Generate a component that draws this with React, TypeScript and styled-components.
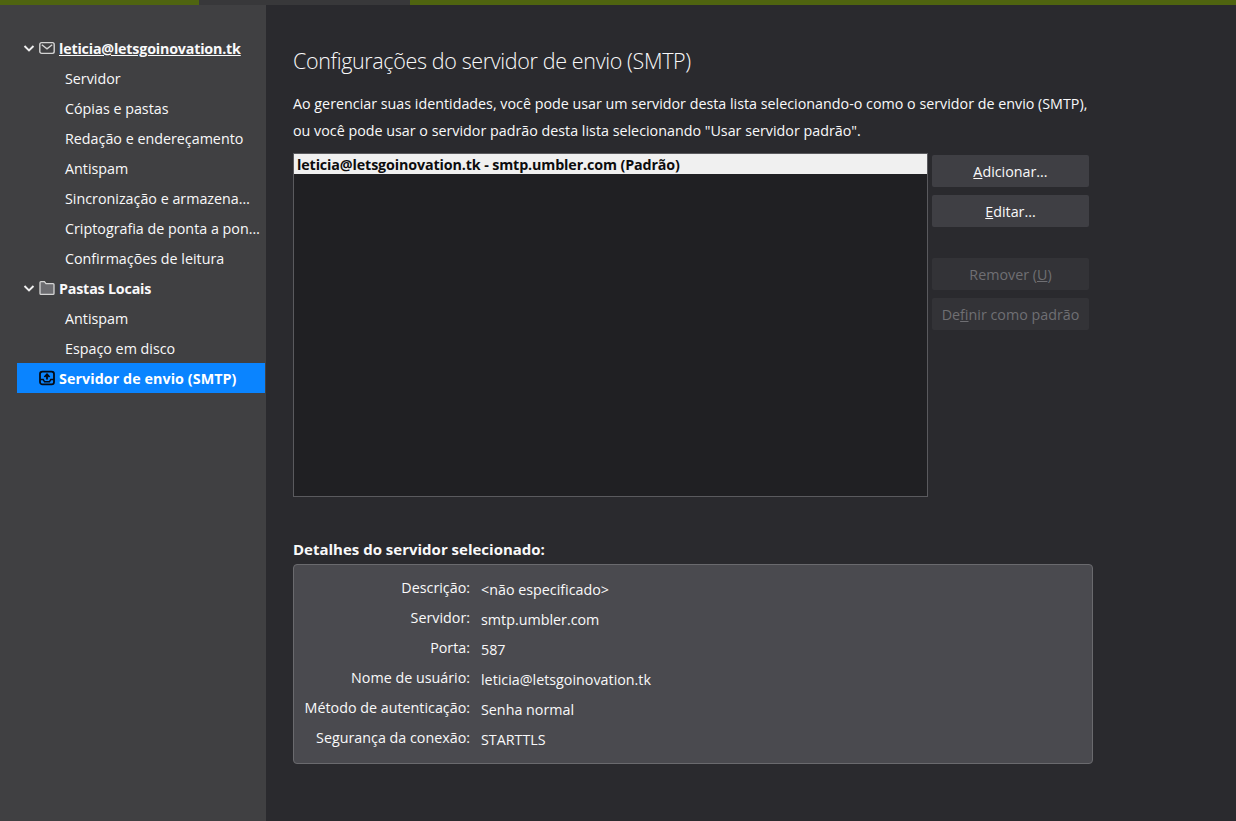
import React from "react";
import styled, { createGlobalStyle } from "styled-components";

const GlobalStyle = createGlobalStyle`
  html, body {
    margin: 0;
    padding: 0;
    height: 100%;
    background: #2a2a2e;
  }
  body {
    font-family: "Open Sans", "Noto Sans", sans-serif;
    font-size: 14.3px;
    color: #f9f9fa;
    overflow: hidden;
  }
`;

const Page = styled.div`
  width: 1236px;
  height: 821px;
  display: flex;
  flex-direction: column;
  background: #2a2a2e;
`;

const TopStrip = styled.div`
  height: 5px;
  display: flex;
  background: #4f6410;
`;

const TopTab = styled.div`
  width: 211px;
  margin-left: 199px;
  background: #38383a;
`;

const Body = styled.div`
  flex: 1;
  display: flex;
  min-height: 0;
`;

const Sidebar = styled.nav`
  width: 266px;
  flex-shrink: 0;
  background: #404042;
  padding: 28px 1px 0 17px;
  box-sizing: border-box;
`;

const TreeRow = styled.div<{ $selected?: boolean }>`
  height: 30px;
  display: flex;
  align-items: center;
  white-space: nowrap;
  background: ${({ $selected }) => ($selected ? "#0a84ff" : "transparent")};
  color: ${({ $selected }) => ($selected ? "#fff" : "#f9f9fa")};
`;

const Twisty = styled.svg`
  width: 12px;
  height: 12px;
  margin-left: 6px;
  flex-shrink: 0;
`;

const RowIcon = styled.svg<{ $indent?: number }>`
  width: 16px;
  height: 16px;
  margin-left: ${({ $indent }) => $indent ?? 4}px;
  margin-right: 4px;
  flex-shrink: 0;
`;

const ParentLabel = styled.span<{ $underline?: boolean; $spacing?: number }>`
  font-weight: 700;
  letter-spacing: ${({ $spacing }) => $spacing ?? -0.2}px;
  text-decoration: ${({ $underline }) => ($underline ? "underline" : "none")};
`;

const ChildLabel = styled.span`
  padding-left: 48px;
  width: 196px;
  box-sizing: content-box;
  overflow: hidden;
  text-overflow: ellipsis;
`;

const Main = styled.main`
  flex: 1;
  padding: 41px 0 0 27px;
  min-width: 0;
`;

const Title = styled.h1`
  margin: 0;
  font-size: 21.5px;
  font-weight: 300;
  line-height: 30px;
  letter-spacing: -0.36px;
`;

const Intro = styled.p`
  margin: 14px 0 0;
  line-height: 27px;
  width: 810px;
  white-space: nowrap;
`;

const ListArea = styled.div`
  display: flex;
  margin-top: 9px;
`;

const ServerList = styled.div`
  width: 635px;
  height: 344px;
  box-sizing: border-box;
  background: #202023;
  border: 1px solid #5a5a5e;
`;

const ServerItem = styled.div`
  height: 20px;
  line-height: 21px;
  padding-left: 3px;
  background: #f0f0f0;
  color: #0c0c0d;
  font-weight: 700;
  letter-spacing: -0.13px;
  white-space: nowrap;
`;

const ButtonColumn = styled.div`
  display: flex;
  flex-direction: column;
  margin: 2px 0 0 4px;
`;

const ActionButton = styled.button<{ $gapBefore?: boolean }>`
  width: 157px;
  height: 32px;
  padding: 0;
  margin-top: ${({ $gapBefore }) => ($gapBefore ? "31px" : "8px")};
  &:first-child {
    margin-top: 0;
  }
  border: none;
  border-radius: 2px;
  background: #3f3f44;
  color: #f9f9fa;
  font-family: inherit;
  font-size: 14.3px;
  white-space: nowrap;
  &:disabled {
    background: #333337;
    color: #6f6f73;
  }
`;

const Key = styled.span`
  text-decoration: underline;
`;

const DetailsHeading = styled.h2`
  margin: 40px 0 0;
  font-size: 15px;
  font-weight: 700;
  line-height: 24px;
`;

const DetailsBox = styled.div`
  width: 800px;
  height: 200px;
  margin-top: 3px;
  box-sizing: border-box;
  padding: 9px 0 0 9px;
  background: #4a4a4f;
  border: 1px solid #6a6a6e;
  border-radius: 4px;
  display: grid;
  grid-template-columns: 167px 1fr;
  grid-auto-rows: 30px;
  column-gap: 11px;
  align-items: center;
`;

const DetailLabel = styled.span`
  text-align: right;
  white-space: nowrap;
  margin-top: -4px;
`;

const DetailValue = styled.span`
  white-space: nowrap;
`;

const childrenAccount = [
  "Servidor",
  "Cópias e pastas",
  "Redação e endereçamento",
  "Antispam",
  "Sincronização e armazenamento",
  "Criptografia de ponta a ponta",
  "Confirmações de leitura",
];

const details: [string, string][] = [
  ["Descrição:", "<não especificado>"],
  ["Servidor:", "smtp.umbler.com"],
  ["Porta:", "587"],
  ["Nome de usuário:", "leticia@letsgoinovation.tk"],
  ["Método de autenticação:", "Senha normal"],
  ["Segurança da conexão:", "STARTTLS"],
];

const Chevron = () => (
  <Twisty viewBox="0 0 12 12" fill="none" stroke="#f0f0f0" strokeWidth="1.9">
    <path d="M1.5 4l4.5 4.5L10.5 4" />
  </Twisty>
);

const App = () => (
  <Page>
    <GlobalStyle />
    <TopStrip>
      <TopTab />
    </TopStrip>
    <Body>
      <Sidebar>
        <TreeRow>
          <Chevron />
          <RowIcon viewBox="0 0 16 16" fill="none" stroke="#d4d4d4" strokeWidth="1.4">
            <rect x="0.8" y="2.6" width="14.4" height="10.8" rx="1.8" />
            <path d="M2.8 4.8L8 8.8l5.2-4" />
          </RowIcon>
          <ParentLabel $underline>leticia@letsgoinovation.tk</ParentLabel>
        </TreeRow>
        {childrenAccount.map((label) => (
          <TreeRow key={label}>
            <ChildLabel>{label}</ChildLabel>
          </TreeRow>
        ))}
        <TreeRow>
          <Chevron />
          <RowIcon viewBox="0 0 16 16" fill="#6c6c70" stroke="#d4d4d4" strokeWidth="1.3">
            <path d="M1 13.4V2.6C1 2 1.4 1.6 2 1.6h3.4L7 3.6h7c.6 0 1 .4 1 1v8.8c0 .6-.4 1-1 1H2c-.6 0-1-.4-1-1z" />
          </RowIcon>
          <ParentLabel>Pastas Locais</ParentLabel>
        </TreeRow>
        {["Antispam", "Espaço em disco"].map((label) => (
          <TreeRow key={label}>
            <ChildLabel>{label}</ChildLabel>
          </TreeRow>
        ))}
        <TreeRow $selected>
          <RowIcon $indent={22} viewBox="0 0 16 16" fill="none" stroke="#050a14" strokeWidth="1.8">
            <rect x="1" y="1.6" width="14" height="12.8" rx="2.4" />
            <path d="M1 9.6h3.2l1.4 2.2h4.8l1.4-2.2H15" strokeWidth="1.5" />
            <path d="M8 9.5V4.4M5.4 7L8 4.3 10.6 7" />
          </RowIcon>
          <ParentLabel $spacing={0.07}>Servidor de envio (SMTP)</ParentLabel>
        </TreeRow>
      </Sidebar>
      <Main>
        <Title>Configurações do servidor de envio (SMTP)</Title>
        <Intro>
          Ao gerenciar suas identidades, você pode usar um servidor desta lista selecionando-o como o servidor de envio (SMTP),
          <br />
          ou você pode usar o servidor padrão desta lista selecionando "Usar servidor padrão".
        </Intro>
        <ListArea>
          <ServerList>
            <ServerItem>leticia@letsgoinovation.tk - smtp.umbler.com (Padrão)</ServerItem>
          </ServerList>
          <ButtonColumn>
            <ActionButton>
              <Key>A</Key>dicionar...
            </ActionButton>
            <ActionButton>
              <Key>E</Key>ditar...
            </ActionButton>
            <ActionButton $gapBefore disabled>
              Remover (<Key>U</Key>)
            </ActionButton>
            <ActionButton disabled>
              De<Key>f</Key>inir como padrão
            </ActionButton>
          </ButtonColumn>
        </ListArea>
        <DetailsHeading>Detalhes do servidor selecionado:</DetailsHeading>
        <DetailsBox>
          {details.map(([label, value]) => (
            <React.Fragment key={label}>
              <DetailLabel>{label}</DetailLabel>
              <DetailValue>{value}</DetailValue>
            </React.Fragment>
          ))}
        </DetailsBox>
      </Main>
    </Body>
  </Page>
);

export default App;
